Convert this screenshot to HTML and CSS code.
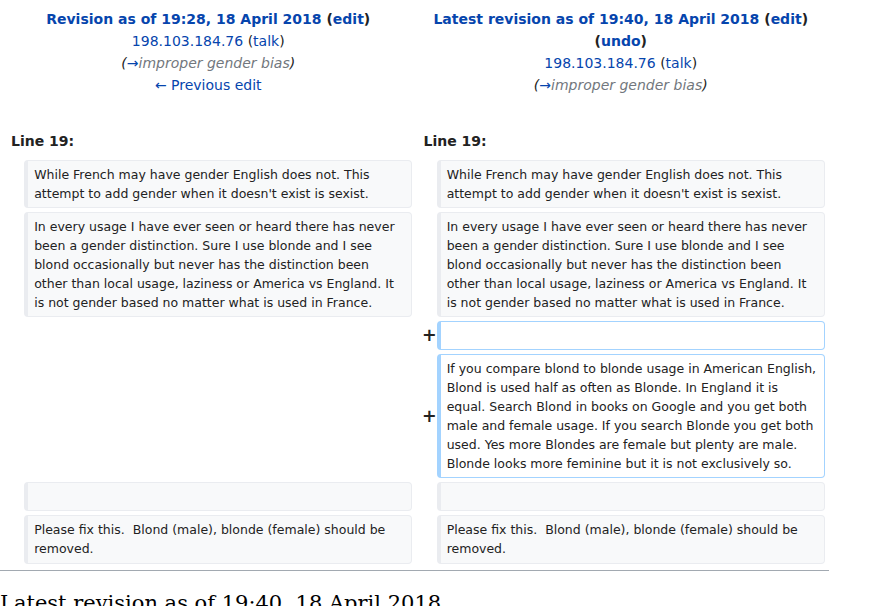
FILE: index.html
```html
<!DOCTYPE html>
<html lang="en">
<head>
<meta charset="utf-8">
<title>Diff</title>
<link rel="stylesheet" href="styles.css">
</head>
<body>
<div class="page">
<table class="diff">
  <colgroup>
    <col class="col-marker">
    <col class="col-content">
    <col class="col-marker">
    <col class="col-content">
  </colgroup>
  <tr class="diff-title">
    <td colspan="2" class="diff-otitle">
      <div><strong><a href="#">Revision as of 19:28, 18 April 2018</a> <span class="paren">(<a href="#">edit</a>)</span></strong></div>
      <div><a href="#">198.103.184.76</a> <span class="paren">(<a href="#">talk</a>)</span></div>
      <div class="comment">(<a href="#">→</a><span class="autocomment">improper gender bias</span>)</div>
      <div><a href="#">← Previous edit</a></div>
    </td>
    <td colspan="2" class="diff-ntitle">
      <div><strong><a href="#">Latest revision as of 19:40, 18 April 2018</a> <span class="paren">(<a href="#">edit</a>)</span> <span class="paren">(<a href="#">undo</a>)</span></strong></div>
      <div><a href="#">198.103.184.76</a> <span class="paren">(<a href="#">talk</a>)</span></div>
      <div class="comment">(<a href="#">→</a><span class="autocomment">improper gender bias</span>)</div>
      <div>&#160;</div>
    </td>
  </tr>
  <tr>
    <td colspan="2" class="diff-lineno">Line 19:</td>
    <td colspan="2" class="diff-lineno">Line 19:</td>
  </tr>
  <tr>
    <td class="diff-marker"></td>
    <td class="diff-context"><div>While French may have gender English does not. This attempt to add gender when it doesn't exist is sexist.</div></td>
    <td class="diff-marker"></td>
    <td class="diff-context"><div>While French may have gender English does not. This attempt to add gender when it doesn't exist is sexist.</div></td>
  </tr>
  <tr>
    <td class="diff-marker"></td>
    <td class="diff-context"><div>In every usage I have ever seen or heard there has never been a gender distinction. Sure I use blonde and I see blond occasionally but never has the distinction been other than local usage, laziness or America vs England. It is not gender based no matter what is used in France.</div></td>
    <td class="diff-marker"></td>
    <td class="diff-context"><div>In every usage I have ever seen or heard there has never been a gender distinction. Sure I use blonde and I see blond occasionally but never has the distinction been other than local usage, laziness or America vs England. It is not gender based no matter what is used in France.</div></td>
  </tr>
  <tr>
    <td colspan="2" class="diff-empty"></td>
    <td class="diff-marker"><span class="mark">+</span></td>
    <td class="diff-addedline"><div><br></div></td>
  </tr>
  <tr>
    <td colspan="2" class="diff-empty"></td>
    <td class="diff-marker"><span class="mark">+</span></td>
    <td class="diff-addedline"><div>If you compare blond to blonde usage in American English, Blond is used half as often as Blonde. In England it is equal. Search Blond in books on Google and you get both male and female usage. If you search Blonde you get both used. Yes more Blondes are female but plenty are male. Blonde looks more feminine but it is not exclusively so.</div></td>
  </tr>
  <tr>
    <td class="diff-marker"></td>
    <td class="diff-context"><div><br></div></td>
    <td class="diff-marker"></td>
    <td class="diff-context"><div><br></div></td>
  </tr>
  <tr>
    <td class="diff-marker"></td>
    <td class="diff-context"><div>Please fix this.&#160; Blond (male), blonde (female) should be removed.</div></td>
    <td class="diff-marker"></td>
    <td class="diff-context"><div>Please fix this.&#160; Blond (male), blonde (female) should be removed.</div></td>
  </tr>
</table>
<hr class="diff-hr">
<h2 class="current-title">Latest revision as of 19:40, 18 April 2018</h2>
</div>
</body>
</html>
```

FILE: styles.css
```css
html, body {
  margin: 0;
  padding: 0;
  background: #ffffff;
}
body {
  font-family: "DejaVu Sans", sans-serif;
  font-size: 14px;
  color: #222222;
}
.page {
  width: 829px;
  line-height: 22px;
}
a {
  color: #0645ad;
  text-decoration: none;
}
table.diff {
  width: 100%;
  border: 0;
  border-spacing: 4px;
  margin: 0;
  table-layout: fixed;
}
.col-marker { width: 2%; }
.col-content { width: 48%; }
table.diff td {
  padding: 4.6px 7px;
  vertical-align: top;
}
table.diff td.diff-otitle,
table.diff td.diff-ntitle {
  text-align: center;
  padding-top: 4px;
  padding-bottom: 3.6px;
}
.paren {
  color: #222222;
}
.comment {
  font-style: italic;
  color: #222222;
}
.autocomment {
  color: #72777d;
}
table.diff td.diff-lineno {
  font-weight: bold;
  padding-bottom: 3.6px;
}
table.diff td.diff-marker {
  text-align: right;
  font-weight: bold;
  font-size: 17.5px;
  line-height: 1.2;
  padding: 0;
  vertical-align: middle;
}
.mark {
  margin-right: -4px;
}
table.diff td.diff-context,
table.diff td.diff-addedline {
  font-size: 12.5px;
  line-height: 19px;
  padding: 4.07px 6px;
  border-style: solid;
  border-width: 1px 1px 1px 4px;
  border-radius: 4px;
}
td.diff-context {
  background: #f8f9fa;
  border-color: #eaecf0;
  color: #222222;
}
td.diff-addedline {
  background: #ffffff;
  border-color: #a3d3ff;
}
table.diff td div {
  word-wrap: break-word;
}
.diff-hr {
  border: 0;
  height: 1px;
  background: #a2a9b1;
  margin: 2px 0 0 0;
}
.current-title {
  font-family: "DejaVu Serif", serif;
  font-weight: normal;
  font-size: 21px;
  line-height: 1.3;
  margin: 19px 0 0 0;
  color: #000000;
}
```
